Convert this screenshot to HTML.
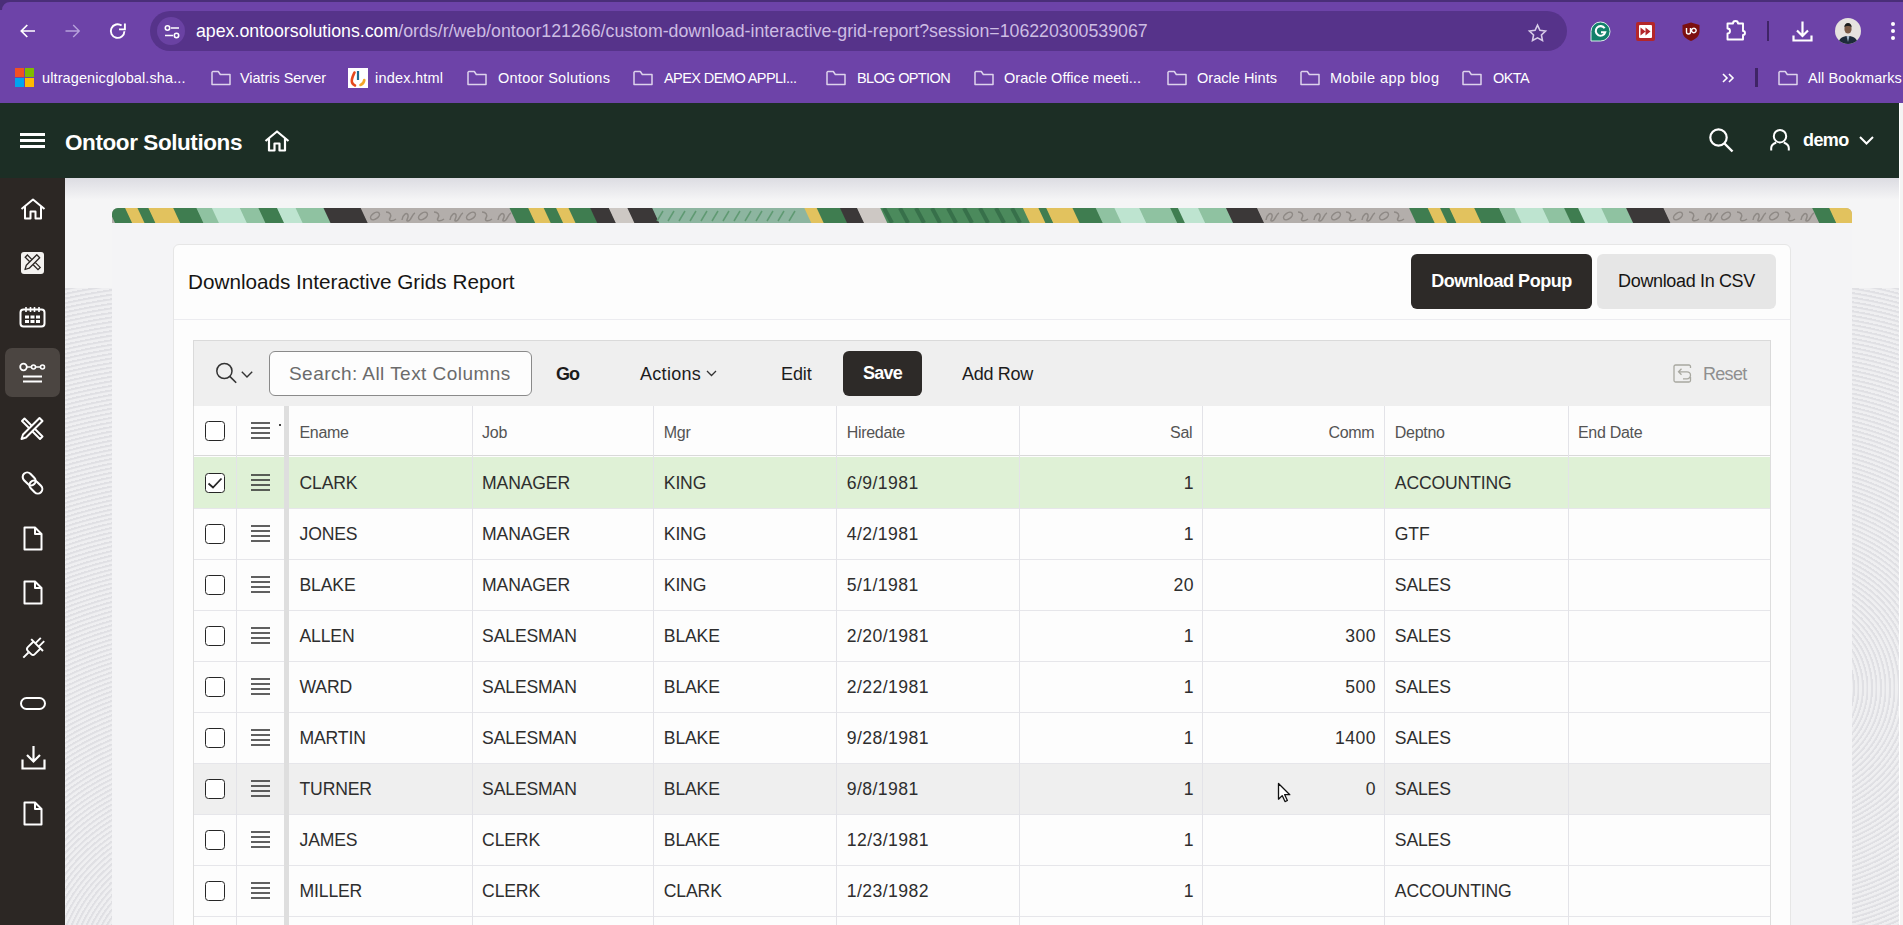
<!DOCTYPE html>
<html><head><meta charset="utf-8">
<style>
*{box-sizing:border-box;margin:0;padding:0}
html,body{width:1903px;height:925px;overflow:hidden;background:#f2f2f2;font-family:"Liberation Sans",sans-serif}
.abs{position:absolute}
svg{position:absolute;overflow:visible}
.chrome{left:0;top:0;width:1903px;height:103px;background:#6d43a8}
.chrome-top{left:0;top:0;width:1903px;height:2px;background:#4a2e78}
.addr{left:150px;top:11px;width:1417px;height:40px;border-radius:20px;background:#56338a}
.siteinfo{left:157px;top:17px;width:28px;height:28px;border-radius:14px;background:#6a42a3}
.url{left:196px;top:20px;font-size:17.75px;color:#fff;white-space:nowrap;line-height:22px}
.url span{color:#cdbde3}
.bm{top:68px;font-size:14.5px;color:#fff;white-space:nowrap;line-height:20px}
.apphdr{left:0;top:103px;width:1899px;height:75px;background:#1c2e25}
.nav{left:0;top:178px;width:65px;height:747px;background:#2c2724}
.bodybg{left:65px;top:178px;width:1834px;height:747px;background:#f5f5f6}
.sbar{left:1899px;top:103px;width:4px;height:822px;background:#f4f4f4;border-left:1px solid #fff}
.region{left:112px;top:223px;width:1740px;height:702px;background:#f4f4f6}
.banner{left:112px;top:208px;width:1740px;height:15px;border-radius:6px 6px 0 0;overflow:hidden}
.card{left:173px;top:244px;width:1618px;height:700px;background:#fdfdfd;border:1px solid #e6e6e6;border-radius:6px}
.ttl{left:188px;top:270px;font-size:20.7px;color:#161513;white-space:nowrap;line-height:24px}
.cbx{width:20px;height:20px;border:1.8px solid #262626;border-radius:3.5px;background:#fff}
.hd{font-size:16px;color:#545454;line-height:18px;white-space:nowrap;letter-spacing:-0.3px}
.cell{font-size:17.6px;color:#2e2e2e;line-height:22px;white-space:nowrap;letter-spacing:-0.15px}
.tb{left:193px;top:340px;width:1578px;height:67px;background:#efefef;border:1px solid #dadada;border-bottom:none}
.btn-dark{background:#2d2a28;color:#fff;font-weight:700;border-radius:6px;text-align:center}
.tbt{top:363px;font-size:18px;color:#1c1c1c;line-height:22px;white-space:nowrap}
</style></head>
<body>
<!-- ============ BROWSER CHROME ============ -->
<div class="abs chrome"></div>
<div class="abs chrome-top"></div>
<svg style="left:0;top:0" width="10" height="10" viewBox="0 0 10 10"><path d="M0 0H10V2A8 8 0 0 0 2 10H0z" fill="#4a2e78"/></svg>
<!-- back / fwd / reload -->
<svg style="left:19px;top:22px" width="18" height="18" viewBox="0 0 18 18"><path d="M16 9H2.5M8.3 3L2.3 9l6 6" fill="none" stroke="#fff" stroke-width="1.7"/></svg>
<svg style="left:64px;top:22px" width="18" height="18" viewBox="0 0 18 18"><path d="M1.5 9H15M9.2 3l6 6-6 6" fill="none" stroke="#b7a2dc" stroke-width="1.4"/></svg>
<svg style="left:109px;top:22px" width="18" height="18" viewBox="0 0 18 18"><path d="M15.4 9.2A6.8 6.8 0 1 1 12.6 3.6" fill="none" stroke="#fff" stroke-width="1.9"/><path d="M10 7.4H15.9V1.5" fill="none" stroke="#fff" stroke-width="1.9"/></svg>
<div class="abs addr"></div>
<div class="abs siteinfo"></div>
<svg style="left:164px;top:25px" width="16" height="14" viewBox="0 0 16 14"><circle cx="3.5" cy="3" r="2.2" fill="none" stroke="#fff" stroke-width="1.6"/><path d="M7 3h8M1 10.5h8" stroke="#fff" stroke-width="1.6"/><circle cx="12.5" cy="10.5" r="2.2" fill="none" stroke="#fff" stroke-width="1.6"/></svg>
<div class="abs url">apex.ontoorsolutions.com<span>/ords/r/web/ontoor121266/custom-download-interactive-grid-report?session=106220300539067</span></div>
<!-- star -->
<svg style="left:1528px;top:24px" width="19" height="18" viewBox="0 0 24 23"><path d="M12 1.5l3.1 6.6 7.2.9-5.3 5 1.4 7.1L12 17.6l-6.4 3.5L7 14l-5.3-5 7.2-.9z" fill="none" stroke="#d7cce8" stroke-width="2"/></svg>
<!-- grammarly -->
<svg style="left:1590px;top:21px" width="21" height="21" viewBox="0 0 21 21"><path d="M1 20V10.5A9.5 9.5 0 1 1 10.5 20z" fill="#11806a" stroke="#d9efe9" stroke-width="1"/><path d="M14.6 7.3A4.8 4.8 0 1 0 15.2 11.2H11" fill="none" stroke="#fff" stroke-width="2.1"/></svg>
<!-- red ff -->
<div class="abs" style="left:1636px;top:22px;width:19px;height:19px;background:#b3262a;border-radius:2px"></div>
<div class="abs" style="left:1639px;top:25px;width:13px;height:13px;background:#fff;border-radius:1px"></div>
<svg style="left:1640px;top:27px" width="12" height="9" viewBox="0 0 12 9"><path d="M0.5 0.5l5 4-5 4zM5.5 0.5l5 4-5 4z" fill="#b3262a"/></svg>
<!-- ublock -->
<svg style="left:1682px;top:22px" width="18" height="19" viewBox="0 0 18 19"><path d="M9 0.5L17.5 3v6.5c0 4.5-3.5 7.5-8.5 9.5C4 17 0.5 14 0.5 9.5V3z" fill="#7c1010"/><path d="M4.5 6v4a2 2 0 0 0 4 0V6M11.8 6.2a2.3 2.3 0 1 0 0.1 0" fill="none" stroke="#fff" stroke-width="1.4"/></svg>
<!-- puzzle -->
<svg style="left:1726px;top:20px" width="21" height="21" viewBox="0 0 21 21"><path d="M1.5 3.5h5.5a2.5 2.5 0 0 1 5 0h5v7.5a2 2 0 0 1 0 4V19.5H1.5v-6a2.5 2.5 0 0 0 0-5z" fill="none" stroke="#fff" stroke-width="1.9" stroke-linejoin="round"/></svg>
<div class="abs" style="left:1767px;top:21px;width:2px;height:20px;background:#3f2466"></div>
<!-- download -->
<svg style="left:1792px;top:21px" width="21" height="21" viewBox="0 0 21 21"><path d="M10.5 0.5v14M5 9.5l5.5 5.5 5.5-5.5M1.5 14.5v5h18v-5" fill="none" stroke="#fff" stroke-width="2.2"/></svg>
<!-- avatar -->
<svg style="left:1835px;top:18px" width="26" height="26" viewBox="0 0 26 26"><defs><clipPath id="av"><circle cx="13" cy="13" r="13"/></clipPath></defs><g clip-path="url(#av)"><rect width="26" height="26" fill="#e6e2df"/><path d="M3 26c1-6 5-8 10-8s9 2 10 8z" fill="#1d2a3a"/><path d="M11.5 18l1.5 6 1.5-6z" fill="#9fb3c8"/><ellipse cx="13" cy="11" rx="3.6" ry="4.6" fill="#7a5a46"/><path d="M9.3 9.5c0-3 1.5-4.5 3.7-4.5s3.7 1.5 3.7 4.5c-1-1.2-2.2-1.6-3.7-1.6s-2.7.4-3.7 1.6z" fill="#1b1b1b"/></g></svg>
<div class="abs" style="left:1891px;top:22px;width:4px;height:4px;border-radius:2px;background:#fff"></div>
<div class="abs" style="left:1891px;top:29px;width:4px;height:4px;border-radius:2px;background:#fff"></div>
<div class="abs" style="left:1891px;top:36px;width:4px;height:4px;border-radius:2px;background:#fff"></div>

<!-- bookmarks -->
<div class="abs" style="left:15px;top:68px;width:9px;height:9px;background:#f25022"></div>
<div class="abs" style="left:25px;top:68px;width:9px;height:9px;background:#7fba00"></div>
<div class="abs" style="left:15px;top:78px;width:9px;height:9px;background:#00a4ef"></div>
<div class="abs" style="left:25px;top:78px;width:9px;height:9px;background:#ffb900"></div>
<div class="abs bm" style="left:42px;letter-spacing:0.11px">ultragenicglobal.sha...</div>
<svg style="left:211px;top:70px" width="20" height="16" viewBox="0 0 20 16"><path d="M1 2.2v12.3h18V4.5H9.3L7.3 1.5H1.8z" fill="none" stroke="#ddd3ec" stroke-width="1.5" stroke-linejoin="round"/></svg>
<svg style="left:467px;top:70px" width="20" height="16" viewBox="0 0 20 16"><path d="M1 2.2v12.3h18V4.5H9.3L7.3 1.5H1.8z" fill="none" stroke="#ddd3ec" stroke-width="1.5" stroke-linejoin="round"/></svg>
<svg style="left:633px;top:70px" width="20" height="16" viewBox="0 0 20 16"><path d="M1 2.2v12.3h18V4.5H9.3L7.3 1.5H1.8z" fill="none" stroke="#ddd3ec" stroke-width="1.5" stroke-linejoin="round"/></svg>
<svg style="left:826px;top:70px" width="20" height="16" viewBox="0 0 20 16"><path d="M1 2.2v12.3h18V4.5H9.3L7.3 1.5H1.8z" fill="none" stroke="#ddd3ec" stroke-width="1.5" stroke-linejoin="round"/></svg>
<svg style="left:974px;top:70px" width="20" height="16" viewBox="0 0 20 16"><path d="M1 2.2v12.3h18V4.5H9.3L7.3 1.5H1.8z" fill="none" stroke="#ddd3ec" stroke-width="1.5" stroke-linejoin="round"/></svg>
<svg style="left:1167px;top:70px" width="20" height="16" viewBox="0 0 20 16"><path d="M1 2.2v12.3h18V4.5H9.3L7.3 1.5H1.8z" fill="none" stroke="#ddd3ec" stroke-width="1.5" stroke-linejoin="round"/></svg>
<svg style="left:1300px;top:70px" width="20" height="16" viewBox="0 0 20 16"><path d="M1 2.2v12.3h18V4.5H9.3L7.3 1.5H1.8z" fill="none" stroke="#ddd3ec" stroke-width="1.5" stroke-linejoin="round"/></svg>
<svg style="left:1462px;top:70px" width="20" height="16" viewBox="0 0 20 16"><path d="M1 2.2v12.3h18V4.5H9.3L7.3 1.5H1.8z" fill="none" stroke="#ddd3ec" stroke-width="1.5" stroke-linejoin="round"/></svg>
<svg style="left:1778px;top:70px" width="20" height="16" viewBox="0 0 20 16"><path d="M1 2.2v12.3h18V4.5H9.3L7.3 1.5H1.8z" fill="none" stroke="#ddd3ec" stroke-width="1.5" stroke-linejoin="round"/></svg>

<div class="abs bm" style="left:240px;letter-spacing:-0.05px">Viatris Server</div>
<div class="abs" style="left:348px;top:68px;width:20px;height:20px;background:#fff"></div>
<svg style="left:348px;top:68px" width="20" height="20" viewBox="0 0 20 20"><path d="M6.5 4.5C5 8 3 11 4 14.5c.5 1.5 1.5 2.5 3 3" fill="none" stroke="#e5481c" stroke-width="2.6" stroke-linecap="round"/><path d="M10 3v9" stroke="#1d6b8f" stroke-width="2.2"/><path d="M12.5 17c2.5-1 3.5-2.5 3.8-5" fill="none" stroke="#f4a62a" stroke-width="2.6" stroke-linecap="round"/></svg>
<div class="abs bm" style="left:375px;letter-spacing:0.2px">index.html</div>
<div class="abs bm" style="left:498px;letter-spacing:0.26px">Ontoor Solutions</div>
<div class="abs bm" style="left:664px;letter-spacing:-0.57px">APEX DEMO APPLI...</div>
<div class="abs bm" style="left:857px;letter-spacing:-0.63px">BLOG OPTION</div>
<div class="abs bm" style="left:1004px;letter-spacing:0.05px">Oracle Office meeti...</div>
<div class="abs bm" style="left:1197px;letter-spacing:0.02px">Oracle Hints</div>
<div class="abs bm" style="left:1330px;letter-spacing:0.47px">Mobile app blog</div>
<div class="abs bm" style="left:1493px;letter-spacing:-0.6px">OKTA</div>
<svg style="left:1722px;top:73px" width="12" height="10" viewBox="0 0 12 10"><path d="M1 1l4 4-4 4M7 1l4 4-4 4" fill="none" stroke="#fff" stroke-width="1.6"/></svg>
<div class="abs" style="left:1755px;top:68px;width:3px;height:19px;background:#3f2466"></div>
<div class="abs bm" style="left:1808px;letter-spacing:0.1px">All Bookmarks</div>

<!-- ============ APP HEADER ============ -->
<div class="abs apphdr"></div>
<div class="abs sbar"></div>
<div class="abs" style="left:20px;top:133px;width:25px;height:3px;background:#fff"></div>
<div class="abs" style="left:20px;top:139px;width:25px;height:3px;background:#fff"></div>
<div class="abs" style="left:20px;top:145px;width:25px;height:3px;background:#fff"></div>
<div class="abs" style="left:65px;top:128.5px;font-size:22.5px;font-weight:700;color:#fff;letter-spacing:-0.42px;line-height:28px;white-space:nowrap">Ontoor Solutions</div>
<svg style="left:264px;top:130px" width="26" height="22" viewBox="0 0 26 22"><path d="M1.5 11L13 1.5 24.5 11M5 8.5V20.5h5.5v-7h5v7H21V8.5" fill="none" stroke="#fff" stroke-width="2.2" stroke-linejoin="round"/></svg>
<svg style="left:1709px;top:128px" width="25" height="25" viewBox="0 0 25 25"><circle cx="9.5" cy="9.5" r="8.2" fill="none" stroke="#fff" stroke-width="2.2"/><path d="M15.5 15.5l8 8" stroke="#fff" stroke-width="2.4"/></svg>
<svg style="left:1770px;top:129px" width="20" height="22" viewBox="0 0 20 22"><circle cx="10" cy="7.2" r="6.2" fill="none" stroke="#fff" stroke-width="2"/><path d="M1.2 21.5v-2.5c0-3 2.5-4.5 5-5.5M18.8 21.5v-2.5c0-3-2.5-4.5-5-5.5" fill="none" stroke="#fff" stroke-width="2"/></svg>
<div class="abs" style="left:1803px;top:129px;font-size:18px;font-weight:700;color:#fff;letter-spacing:-0.6px;line-height:22px">demo</div>
<svg style="left:1859px;top:136px" width="15" height="9" viewBox="0 0 15 9"><path d="M1 1l6.5 6.5L14 1" fill="none" stroke="#fff" stroke-width="2"/></svg>

<!-- ============ NAV + BODY ============ -->
<div class="abs bodybg"></div>
<div class="abs nav"></div>
<svg style="left:20px;top:198px" width="26" height="22" viewBox="0 0 26 22"><path d="M1.5 11L13 1.5 24.5 11M5 8.5V20.5h5.5v-7h5v7H21V8.5" fill="none" stroke="#fff" stroke-width="2" stroke-linejoin="round"/></svg>
<div class="abs" style="left:21px;top:252px;width:23px;height:22px;border-radius:3px;background:#f4f2f0"></div>
<svg style="left:21px;top:252px" width="23" height="22" viewBox="0 0 23 22"><path d="M4 17.5l1.3-4.2L15.8 2.8l2.9 2.9L8.2 16.2z" fill="none" stroke="#2c2724" stroke-width="1.3" stroke-linejoin="round"/><path d="M8.8 9.8L4.2 5.2 6.4 3l4.6 4.6M12.2 12.8l4.8 4.8 2.2-2.2-4.8-4.8" fill="none" stroke="#2c2724" stroke-width="1.3"/></svg>
<svg style="left:19px;top:306px" width="27" height="22" viewBox="0 0 27 22"><rect x="1.5" y="3.5" width="24" height="17" rx="3" fill="none" stroke="#fff" stroke-width="2"/><path d="M7 1v5M11.5 1v5M15.5 1v5M20 1v5" stroke="#fff" stroke-width="1.6"/><rect x="6" y="9.5" width="4" height="3" fill="#fff"/><rect x="11.5" y="9.5" width="4" height="3" fill="#fff"/><rect x="17" y="9.5" width="4" height="3" fill="#fff"/><rect x="6" y="14" width="4" height="3" fill="#fff"/><rect x="11.5" y="14" width="4" height="3" fill="#fff"/><rect x="17" y="14" width="4" height="3" fill="#fff"/></svg>
<div class="abs" style="left:5px;top:348px;width:55px;height:49px;border-radius:7px;background:#4b4541"></div>
<svg style="left:19px;top:362px" width="27" height="22" viewBox="0 0 27 22"><circle cx="4.5" cy="5" r="3.3" fill="none" stroke="#fff" stroke-width="1.8"/><circle cx="14.5" cy="5" r="2" fill="none" stroke="#fff" stroke-width="1.6"/><circle cx="23.5" cy="5" r="2" fill="none" stroke="#fff" stroke-width="1.6"/><path d="M8 5h4.5M16.5 5h5" stroke="#fff" stroke-width="1.6"/><path d="M4 14.5h19M4 19.5h19" stroke="#fff" stroke-width="2"/></svg>
<svg style="left:20px;top:416px" width="25" height="24" viewBox="0 0 25 24"><path d="M4.5 2.5l18 18-2.5 2.5-18-18z" fill="none" stroke="#fff" stroke-width="2" stroke-linejoin="round"/><path d="M19.5 2l3 3L6 21.5 1.5 23 3 18.5z" fill="#2c2724" stroke="#fff" stroke-width="2" stroke-linejoin="round"/></svg>
<svg style="left:19px;top:470px" width="27" height="26" viewBox="0 0 27 26"><g transform="rotate(45 13.5 13)"><rect x="1" y="8" width="14.5" height="9" rx="4.5" fill="none" stroke="#fff" stroke-width="2.1"/><rect x="11.5" y="9" width="14.5" height="9" rx="4.5" fill="none" stroke="#fff" stroke-width="2.1"/></g></svg>
<svg style="left:23px;top:526px" width="20" height="25" viewBox="0 0 20 25"><path d="M1.5 1.5h10.5l6.5 6.5v15.5h-17z" fill="none" stroke="#fff" stroke-width="2" stroke-linejoin="round"/><path d="M12 1.5v6.5h6.5" fill="none" stroke="#fff" stroke-width="2" stroke-linejoin="round"/></svg>
<svg style="left:23px;top:580px" width="20" height="25" viewBox="0 0 20 25"><path d="M1.5 1.5h10.5l6.5 6.5v15.5h-17z" fill="none" stroke="#fff" stroke-width="2" stroke-linejoin="round"/><path d="M12 1.5v6.5h6.5" fill="none" stroke="#fff" stroke-width="2" stroke-linejoin="round"/></svg>
<svg style="left:23px;top:801px" width="20" height="25" viewBox="0 0 20 25"><path d="M1.5 1.5h10.5l6.5 6.5v15.5h-17z" fill="none" stroke="#fff" stroke-width="2" stroke-linejoin="round"/><path d="M12 1.5v6.5h6.5" fill="none" stroke="#fff" stroke-width="2" stroke-linejoin="round"/></svg>
<svg style="left:22px;top:636px" width="24" height="24" viewBox="0 0 24 24"><path d="M9.2 3.2L21 15" stroke="#fff" stroke-width="1.9"/><path d="M11.5 5.5L5.8 11.2Q4 13 5.8 14.8L9.2 18.2Q11 20 12.8 18.2L18.5 12.5" fill="none" stroke="#fff" stroke-width="1.9"/><path d="M13.3 7.3L18.8 1.8M16.7 10.7L22.2 5.2M6.5 16.5L1.3 21.7" stroke="#fff" stroke-width="1.9"/></svg>
<div class="abs" style="left:20px;top:697px;width:26px;height:13px;border:2px solid #fff;border-radius:7px"></div>
<svg style="left:21px;top:745px" width="25" height="25" viewBox="0 0 25 25"><path d="M12.5 1v15M6 10l6.5 6.5L19 10M1.5 14.5v9h22v-9" fill="none" stroke="#fff" stroke-width="2.2"/></svg>

<div class="abs" style="left:65px;top:288px;width:47px;height:637px;background:#eaeaec;background-image:repeating-radial-gradient(circle at 150px 700px,#efeff1 0,#efeff1 2px,#e0e0e4 3px,#e0e0e4 4.5px)"></div>
<div class="abs" style="left:1852px;top:288px;width:47px;height:637px;background:#eaeaec;background-image:repeating-radial-gradient(circle at -60px 400px,#efeff1 0,#efeff1 2px,#e0e0e4 3px,#e0e0e4 4.5px)"></div>
<div class="abs region"></div>
<div class="abs" style="left:65px;top:178px;width:1834px;height:22px;background:linear-gradient(rgba(200,200,210,0.55),rgba(230,230,235,0))"></div>
<svg style="left:112px;top:208px" width="1740" height="15" viewBox="0 0 1740 15"><defs><clipPath id="bc"><path d="M0 15V6a6 6 0 0 1 6-6H1734a6 6 0 0 1 6 6V15z"/></clipPath></defs><g clip-path="url(#bc)"><rect width="1740" height="15" fill="#b3aeab"/><path d="M-4.0 0H13.7L20.7 15H3.0z" fill="#3f7d50"/><path d="M13.1 0H26.1L33.1 15H20.1z" fill="#e2c25e"/><path d="M25.5 0H37.0L44.0 15H32.5z" fill="#3f7d50"/><path d="M36.4 0H61.8L68.8 15H43.4z" fill="#e2c25e"/><path d="M61.2 0H85.0L92.0 15H68.2z" fill="#3f7d50"/><path d="M84.4 0H100.5L107.5 15H91.4z" fill="#8fc2a1"/><path d="M99.9 0H128.4L135.4 15H106.9z" fill="#bee4d0"/><path d="M127.8 0H147.0L154.0 15H134.8z" fill="#8fc2a1"/><path d="M146.4 0H165.6L172.6 15H153.4z" fill="#3f7d50"/><path d="M165.0 0H184.2L191.2 15H172.0z" fill="#bee4d0"/><path d="M183.6 0H212.1L219.1 15H190.6z" fill="#8fc2a1"/><path d="M211.5 0H249.3L256.3 15H218.5z" fill="#3b3838"/><path d="M248.7 0H398.1L405.1 15H255.7z" fill="#b3aeab"/><path d="M397.5 0H416.8L423.8 15H404.5z" fill="#3f7d50"/><path d="M416.2 0H432.3L439.3 15H423.2z" fill="#e2c25e"/><path d="M431.7 0H444.7L451.7 15H438.7z" fill="#3f7d50"/><path d="M444.1 0H457.1L464.1 15H451.1z" fill="#e2c25e"/><path d="M456.5 0H478.8L485.8 15H463.5z" fill="#3f7d50"/><path d="M478.2 0H497.4L504.4 15H485.2z" fill="#3b3838"/><path d="M496.8 0H516.0L523.0 15H503.8z" fill="#cdc8c4"/><path d="M515.4 0H540.8L547.8 15H522.4z" fill="#3b3838"/><path d="M540.2 0H692.9L699.9 15H547.2z" fill="#8db5a0"/><path d="M692.3 0H705.3L712.3 15H699.3z" fill="#e2c25e"/><path d="M704.7 0H728.6L735.6 15H711.7z" fill="#3f7d50"/><path d="M728.0 0H745.6L752.6 15H735.0z" fill="#3b3838"/><path d="M745.0 0H768.9L775.9 15H752.0z" fill="#cdc8c4"/><path d="M768.3 0H911.5L918.5 15H775.3z" fill="#4b8a5c"/><path d="M910.9 0H927.0L934.0 15H917.9z" fill="#e2c25e"/><path d="M926.4 0H934.8L941.8 15H933.4z" fill="#3f7d50"/><path d="M934.2 0H961.1L968.1 15H941.2z" fill="#e2c25e"/><path d="M960.5 0H984.3L991.3 15H967.5z" fill="#3f7d50"/><path d="M983.7 0H1003.0L1010.0 15H990.7z" fill="#8fc2a1"/><path d="M1002.4 0H1027.8L1034.8 15H1009.4z" fill="#bee4d0"/><path d="M1027.2 0H1058.8L1065.8 15H1034.2z" fill="#8fc2a1"/><path d="M1058.2 0H1066.5L1073.5 15H1065.2z" fill="#3f7d50"/><path d="M1065.9 0H1086.7L1093.7 15H1072.9z" fill="#bee4d0"/><path d="M1086.1 0H1114.6L1121.6 15H1093.1z" fill="#8fc2a1"/><path d="M1114.0 0H1145.6L1152.6 15H1121.0z" fill="#3b3838"/><path d="M1145.0 0H1297.7L1304.7 15H1152.0z" fill="#b3aeab"/><path d="M1297.1 0H1316.3L1323.3 15H1304.1z" fill="#3f7d50"/><path d="M1315.7 0H1328.7L1335.7 15H1322.7z" fill="#e2c25e"/><path d="M1328.1 0H1338.0L1345.0 15H1335.1z" fill="#3f7d50"/><path d="M1337.4 0H1362.8L1369.8 15H1344.4z" fill="#e2c25e"/><path d="M1362.2 0H1387.6L1394.6 15H1369.2z" fill="#3f7d50"/><path d="M1387.0 0H1403.1L1410.1 15H1394.0z" fill="#8fc2a1"/><path d="M1402.5 0H1431.0L1438.0 15H1409.5z" fill="#bee4d0"/><path d="M1430.4 0H1452.7L1459.7 15H1437.4z" fill="#8fc2a1"/><path d="M1452.1 0H1466.7L1473.7 15H1459.1z" fill="#3f7d50"/><path d="M1466.1 0H1489.9L1496.9 15H1473.1z" fill="#bee4d0"/><path d="M1489.3 0H1514.7L1521.7 15H1496.3z" fill="#8fc2a1"/><path d="M1514.1 0H1552.0L1559.0 15H1521.1z" fill="#3b3838"/><path d="M1551.4 0H1700.8L1707.8 15H1558.4z" fill="#b3aeab"/><path d="M1700.2 0H1717.8L1724.8 15H1707.2z" fill="#3f7d50"/><path d="M1717.2 0H1745.1L1752.1 15H1724.2z" fill="#e2c25e"/><ellipse cx="263" cy="8" rx="5" ry="3" transform="rotate(-35 263 8)" fill="none" stroke="#8e8985" stroke-width="1.5"/><path d="M274 4c4 0 6 3 4 6s2 4 6 1" fill="none" stroke="#8e8985" stroke-width="1.5"/><path d="M290 12c1-6 5-8 6-5s-3 6 0 6 4-7 7-8" fill="none" stroke="#8e8985" stroke-width="1.5"/><ellipse cx="311" cy="8" rx="5" ry="3" transform="rotate(-35 311 8)" fill="none" stroke="#8e8985" stroke-width="1.5"/><path d="M322 4c4 0 6 3 4 6s2 4 6 1" fill="none" stroke="#8e8985" stroke-width="1.5"/><path d="M338 12c1-6 5-8 6-5s-3 6 0 6 4-7 7-8" fill="none" stroke="#8e8985" stroke-width="1.5"/><ellipse cx="359" cy="8" rx="5" ry="3" transform="rotate(-35 359 8)" fill="none" stroke="#8e8985" stroke-width="1.5"/><path d="M370 4c4 0 6 3 4 6s2 4 6 1" fill="none" stroke="#8e8985" stroke-width="1.5"/><path d="M386 12c1-6 5-8 6-5s-3 6 0 6 4-7 7-8" fill="none" stroke="#8e8985" stroke-width="1.5"/><path d="M545 13l6-10" stroke="#5f9a72" stroke-width="1.5"/><path d="M556 13l6-10" stroke="#5f9a72" stroke-width="1.5"/><path d="M567 13l6-10" stroke="#5f9a72" stroke-width="1.5"/><path d="M578 13l6-10" stroke="#5f9a72" stroke-width="1.5"/><path d="M589 13l6-10" stroke="#5f9a72" stroke-width="1.5"/><path d="M600 13l6-10" stroke="#5f9a72" stroke-width="1.5"/><path d="M611 13l6-10" stroke="#5f9a72" stroke-width="1.5"/><path d="M622 13l6-10" stroke="#5f9a72" stroke-width="1.5"/><path d="M633 13l6-10" stroke="#5f9a72" stroke-width="1.5"/><path d="M644 13l6-10" stroke="#5f9a72" stroke-width="1.5"/><path d="M655 13l6-10" stroke="#5f9a72" stroke-width="1.5"/><path d="M666 13l6-10" stroke="#5f9a72" stroke-width="1.5"/><path d="M677 13l6-10" stroke="#5f9a72" stroke-width="1.5"/><path d="M772 0l8 15" stroke="#37704a" stroke-width="4"/><path d="M788 0l8 15" stroke="#37704a" stroke-width="4"/><path d="M804 0l8 15" stroke="#37704a" stroke-width="4"/><path d="M820 0l8 15" stroke="#37704a" stroke-width="4"/><path d="M836 0l8 15" stroke="#37704a" stroke-width="4"/><path d="M852 0l8 15" stroke="#37704a" stroke-width="4"/><path d="M868 0l8 15" stroke="#37704a" stroke-width="4"/><path d="M884 0l8 15" stroke="#37704a" stroke-width="4"/><path d="M900 0l8 15" stroke="#37704a" stroke-width="4"/><path d="M1154 12c1-6 5-8 6-5s-3 6 0 6 4-7 7-8" fill="none" stroke="#8e8985" stroke-width="1.5"/><ellipse cx="1176" cy="8" rx="5" ry="3" transform="rotate(-35 1176 8)" fill="none" stroke="#8e8985" stroke-width="1.5"/><path d="M1186 4c4 0 6 3 4 6s2 4 6 1" fill="none" stroke="#8e8985" stroke-width="1.5"/><path d="M1202 12c1-6 5-8 6-5s-3 6 0 6 4-7 7-8" fill="none" stroke="#8e8985" stroke-width="1.5"/><ellipse cx="1224" cy="8" rx="5" ry="3" transform="rotate(-35 1224 8)" fill="none" stroke="#8e8985" stroke-width="1.5"/><path d="M1234 4c4 0 6 3 4 6s2 4 6 1" fill="none" stroke="#8e8985" stroke-width="1.5"/><path d="M1250 12c1-6 5-8 6-5s-3 6 0 6 4-7 7-8" fill="none" stroke="#8e8985" stroke-width="1.5"/><ellipse cx="1272" cy="8" rx="5" ry="3" transform="rotate(-35 1272 8)" fill="none" stroke="#8e8985" stroke-width="1.5"/><path d="M1282 4c4 0 6 3 4 6s2 4 6 1" fill="none" stroke="#8e8985" stroke-width="1.5"/><ellipse cx="1566" cy="8" rx="5" ry="3" transform="rotate(-35 1566 8)" fill="none" stroke="#8e8985" stroke-width="1.5"/><path d="M1577 4c4 0 6 3 4 6s2 4 6 1" fill="none" stroke="#8e8985" stroke-width="1.5"/><path d="M1593 12c1-6 5-8 6-5s-3 6 0 6 4-7 7-8" fill="none" stroke="#8e8985" stroke-width="1.5"/><ellipse cx="1614" cy="8" rx="5" ry="3" transform="rotate(-35 1614 8)" fill="none" stroke="#8e8985" stroke-width="1.5"/><path d="M1625 4c4 0 6 3 4 6s2 4 6 1" fill="none" stroke="#8e8985" stroke-width="1.5"/><path d="M1641 12c1-6 5-8 6-5s-3 6 0 6 4-7 7-8" fill="none" stroke="#8e8985" stroke-width="1.5"/><ellipse cx="1662" cy="8" rx="5" ry="3" transform="rotate(-35 1662 8)" fill="none" stroke="#8e8985" stroke-width="1.5"/><path d="M1673 4c4 0 6 3 4 6s2 4 6 1" fill="none" stroke="#8e8985" stroke-width="1.5"/><path d="M1689 12c1-6 5-8 6-5s-3 6 0 6 4-7 7-8" fill="none" stroke="#8e8985" stroke-width="1.5"/></g></svg>
<div class="abs card"></div>
<div class="abs ttl">Downloads Interactive Grids Report</div>
<div class="abs" style="left:174px;top:319px;width:1616px;height:1px;background:#ececf0"></div>
<div class="abs btn-dark" style="left:1411px;top:254px;width:181px;height:55px;font-size:18px;line-height:55px;letter-spacing:-0.45px">Download Popup</div>
<div class="abs" style="left:1597px;top:254px;width:179px;height:55px;background:#e6e6e6;border-radius:6px;font-size:18px;line-height:55px;text-align:center;color:#161513;letter-spacing:-0.35px">Download In CSV</div>
<!-- toolbar -->
<div class="abs tb"></div>
<svg style="left:215px;top:362px" width="24" height="24" viewBox="0 0 24 24"><circle cx="9.4" cy="9" r="7.6" fill="none" stroke="#333" stroke-width="1.5"/><path d="M14.8 14.4l6.4 6.4" stroke="#333" stroke-width="1.6"/></svg>
<svg style="left:241px;top:371px" width="12" height="7" viewBox="0 0 12 7"><path d="M0.8 0.8l5.2 5.2 5.2-5.2" fill="none" stroke="#333" stroke-width="1.4"/></svg>
<div class="abs" style="left:269px;top:351px;width:263px;height:45px;border:1.5px solid #8a8a8a;border-radius:6px;background:#fdfdfd"></div>
<div class="abs" style="left:289px;top:363px;font-size:19px;color:#6b6b6b;line-height:22px;letter-spacing:0.45px;white-space:nowrap">Search: All Text Columns</div>
<div class="abs tbt" style="left:556px;font-weight:700;letter-spacing:-1px">Go</div>
<div class="abs tbt" style="left:640px;letter-spacing:0.3px">Actions</div>
<svg style="left:706px;top:370px" width="11" height="7" viewBox="0 0 11 7"><path d="M1 1l4.5 4.5L10 1" fill="none" stroke="#333" stroke-width="1.3"/></svg>
<div class="abs tbt" style="left:781px;letter-spacing:-0.1px">Edit</div>
<div class="abs btn-dark" style="left:843px;top:351px;width:79px;height:45px;font-size:18px;line-height:45px;letter-spacing:-0.8px">Save</div>
<div class="abs tbt" style="left:962px;letter-spacing:-0.3px">Add Row</div>
<svg style="left:1673px;top:364px" width="20" height="19" viewBox="0 0 20 19"><path d="M17.5 4V2.5a1.5 1.5 0 0 0-1.5-1.5H2.5A1.5 1.5 0 0 0 1 2.5v14A1.5 1.5 0 0 0 2.5 18H16a1.5 1.5 0 0 0 1.5-1.5V13" fill="none" stroke="#a8a8a0" stroke-width="1.3"/><path d="M5.5 7.8H14a3.5 3.5 0 0 1 0 7H10M8.5 4.8l-3 3 3 3" fill="none" stroke="#a8a8a0" stroke-width="1.3"/></svg>
<div class="abs tbt" style="left:1703px;color:#8f8f8f;letter-spacing:-0.7px">Reset</div>
<div class="abs" style="left:193px;top:406px;width:1578px;height:530px;background:#fdfdfd;border-left:1px solid #dedede;border-right:1px solid #dedede"></div>
<div class="abs" style="left:194px;top:406px;width:1576px;height:50px;background:#fdfdfd;border-bottom:1px solid #d9d9d9"></div>
<div class="abs" style="left:194px;top:457px;width:1576px;height:3px;background:linear-gradient(#dcdcdc,rgba(220,220,220,0))"></div>
<div class="abs" style="left:194px;top:457px;width:1576px;height:51px;background:#dff1d6"></div>
<div class="abs" style="left:194px;top:508px;width:1576px;height:1px;background:#e6e6ea"></div>
<div class="abs" style="left:194px;top:559px;width:1576px;height:1px;background:#e6e6ea"></div>
<div class="abs" style="left:194px;top:610px;width:1576px;height:1px;background:#e6e6ea"></div>
<div class="abs" style="left:194px;top:661px;width:1576px;height:1px;background:#e6e6ea"></div>
<div class="abs" style="left:194px;top:712px;width:1576px;height:1px;background:#e6e6ea"></div>
<div class="abs" style="left:194px;top:763px;width:1576px;height:1px;background:#e6e6ea"></div>
<div class="abs" style="left:194px;top:764px;width:1576px;height:50px;background:#efefef"></div>
<div class="abs" style="left:194px;top:814px;width:1576px;height:1px;background:#e6e6ea"></div>
<div class="abs" style="left:194px;top:865px;width:1576px;height:1px;background:#e6e6ea"></div>
<div class="abs" style="left:194px;top:916px;width:1576px;height:1px;background:#e6e6ea"></div>
<div class="abs" style="left:236px;top:406px;width:1px;height:530px;background:#e3e3e8"></div>
<div class="abs" style="left:284px;top:406px;width:5px;height:530px;background:#dedede"></div>
<div class="abs" style="left:472px;top:406px;width:1px;height:530px;background:#e3e3e8"></div>
<div class="abs" style="left:653px;top:406px;width:1px;height:530px;background:#e3e3e8"></div>
<div class="abs" style="left:836px;top:406px;width:1px;height:530px;background:#e3e3e8"></div>
<div class="abs" style="left:1019px;top:406px;width:1px;height:530px;background:#e3e3e8"></div>
<div class="abs" style="left:1202px;top:406px;width:1px;height:530px;background:#e3e3e8"></div>
<div class="abs" style="left:1384px;top:406px;width:1px;height:530px;background:#e3e3e8"></div>
<div class="abs" style="left:1568px;top:406px;width:1px;height:530px;background:#e3e3e8"></div>
<div class="abs cbx" style="left:205px;top:421px"></div>
<svg style="left:251px;top:421.5px" width="20" height="16" viewBox="0 0 20 16"><path d="M0 1h19M0 6h19M0 11h19M0 16h19" stroke="#2c2c2c" stroke-width="1.6"/></svg>
<div class="abs" style="left:279px;top:424px;width:2px;height:2px;background:#444"></div>
<div class="abs hd" style="left:299.5px;top:424px">Ename</div>
<div class="abs hd" style="left:482.1px;top:424px">Job</div>
<div class="abs hd" style="left:663.8px;top:424px">Mgr</div>
<div class="abs hd" style="left:846.7px;top:424px">Hiredate</div>
<div class="abs hd" style="left:1019.1px;width:173.2px;text-align:right;top:424px">Sal</div>
<div class="abs hd" style="left:1202.3px;width:172.0px;text-align:right;top:424px">Comm</div>
<div class="abs hd" style="left:1394.8px;top:424px">Deptno</div>
<div class="abs hd" style="left:1578.0px;top:424px">End Date</div>
<div class="abs cbx" style="left:205px;top:473px"></div><svg style="left:205px;top:473px" width="20" height="20" viewBox="0 0 20 20"><path d="M3.5 10.5l4.5 4 8.5-9" fill="none" stroke="#262626" stroke-width="1.8"/></svg>
<svg style="left:251px;top:473.5px" width="20" height="16" viewBox="0 0 20 16"><path d="M0 1h19M0 6h19M0 11h19M0 16h19" stroke="#2c2c2c" stroke-width="1.6"/></svg>
<div class="abs cell" style="left:299.5px;top:472px">CLARK</div>
<div class="abs cell" style="left:482.1px;top:472px">MANAGER</div>
<div class="abs cell" style="left:663.8px;top:472px">KING</div>
<div class="abs cell" style="left:846.7px;top:472px;letter-spacing:0.45px">6/9/1981</div>
<div class="abs cell" style="left:1019.1px;width:174.9px;text-align:right;top:472px;letter-spacing:0.45px">1</div>
<div class="abs cell" style="left:1394.8px;top:472px">ACCOUNTING</div>
<div class="abs cbx" style="left:205px;top:524px"></div>
<svg style="left:251px;top:524.5px" width="20" height="16" viewBox="0 0 20 16"><path d="M0 1h19M0 6h19M0 11h19M0 16h19" stroke="#2c2c2c" stroke-width="1.6"/></svg>
<div class="abs cell" style="left:299.5px;top:523px">JONES</div>
<div class="abs cell" style="left:482.1px;top:523px">MANAGER</div>
<div class="abs cell" style="left:663.8px;top:523px">KING</div>
<div class="abs cell" style="left:846.7px;top:523px;letter-spacing:0.45px">4/2/1981</div>
<div class="abs cell" style="left:1019.1px;width:174.9px;text-align:right;top:523px;letter-spacing:0.45px">1</div>
<div class="abs cell" style="left:1394.8px;top:523px">GTF</div>
<div class="abs cbx" style="left:205px;top:575px"></div>
<svg style="left:251px;top:575.5px" width="20" height="16" viewBox="0 0 20 16"><path d="M0 1h19M0 6h19M0 11h19M0 16h19" stroke="#2c2c2c" stroke-width="1.6"/></svg>
<div class="abs cell" style="left:299.5px;top:574px">BLAKE</div>
<div class="abs cell" style="left:482.1px;top:574px">MANAGER</div>
<div class="abs cell" style="left:663.8px;top:574px">KING</div>
<div class="abs cell" style="left:846.7px;top:574px;letter-spacing:0.45px">5/1/1981</div>
<div class="abs cell" style="left:1019.1px;width:174.9px;text-align:right;top:574px;letter-spacing:0.45px">20</div>
<div class="abs cell" style="left:1394.8px;top:574px">SALES</div>
<div class="abs cbx" style="left:205px;top:626px"></div>
<svg style="left:251px;top:626.5px" width="20" height="16" viewBox="0 0 20 16"><path d="M0 1h19M0 6h19M0 11h19M0 16h19" stroke="#2c2c2c" stroke-width="1.6"/></svg>
<div class="abs cell" style="left:299.5px;top:625px">ALLEN</div>
<div class="abs cell" style="left:482.1px;top:625px">SALESMAN</div>
<div class="abs cell" style="left:663.8px;top:625px">BLAKE</div>
<div class="abs cell" style="left:846.7px;top:625px;letter-spacing:0.45px">2/20/1981</div>
<div class="abs cell" style="left:1019.1px;width:174.9px;text-align:right;top:625px;letter-spacing:0.45px">1</div>
<div class="abs cell" style="left:1202.3px;width:173.7px;text-align:right;top:625px;letter-spacing:0.45px">300</div>
<div class="abs cell" style="left:1394.8px;top:625px">SALES</div>
<div class="abs cbx" style="left:205px;top:677px"></div>
<svg style="left:251px;top:677.5px" width="20" height="16" viewBox="0 0 20 16"><path d="M0 1h19M0 6h19M0 11h19M0 16h19" stroke="#2c2c2c" stroke-width="1.6"/></svg>
<div class="abs cell" style="left:299.5px;top:676px">WARD</div>
<div class="abs cell" style="left:482.1px;top:676px">SALESMAN</div>
<div class="abs cell" style="left:663.8px;top:676px">BLAKE</div>
<div class="abs cell" style="left:846.7px;top:676px;letter-spacing:0.45px">2/22/1981</div>
<div class="abs cell" style="left:1019.1px;width:174.9px;text-align:right;top:676px;letter-spacing:0.45px">1</div>
<div class="abs cell" style="left:1202.3px;width:173.7px;text-align:right;top:676px;letter-spacing:0.45px">500</div>
<div class="abs cell" style="left:1394.8px;top:676px">SALES</div>
<div class="abs cbx" style="left:205px;top:728px"></div>
<svg style="left:251px;top:728.5px" width="20" height="16" viewBox="0 0 20 16"><path d="M0 1h19M0 6h19M0 11h19M0 16h19" stroke="#2c2c2c" stroke-width="1.6"/></svg>
<div class="abs cell" style="left:299.5px;top:727px">MARTIN</div>
<div class="abs cell" style="left:482.1px;top:727px">SALESMAN</div>
<div class="abs cell" style="left:663.8px;top:727px">BLAKE</div>
<div class="abs cell" style="left:846.7px;top:727px;letter-spacing:0.45px">9/28/1981</div>
<div class="abs cell" style="left:1019.1px;width:174.9px;text-align:right;top:727px;letter-spacing:0.45px">1</div>
<div class="abs cell" style="left:1202.3px;width:173.7px;text-align:right;top:727px;letter-spacing:0.45px">1400</div>
<div class="abs cell" style="left:1394.8px;top:727px">SALES</div>
<div class="abs cbx" style="left:205px;top:779px"></div>
<svg style="left:251px;top:779.5px" width="20" height="16" viewBox="0 0 20 16"><path d="M0 1h19M0 6h19M0 11h19M0 16h19" stroke="#2c2c2c" stroke-width="1.6"/></svg>
<div class="abs cell" style="left:299.5px;top:778px">TURNER</div>
<div class="abs cell" style="left:482.1px;top:778px">SALESMAN</div>
<div class="abs cell" style="left:663.8px;top:778px">BLAKE</div>
<div class="abs cell" style="left:846.7px;top:778px;letter-spacing:0.45px">9/8/1981</div>
<div class="abs cell" style="left:1019.1px;width:174.9px;text-align:right;top:778px;letter-spacing:0.45px">1</div>
<div class="abs cell" style="left:1202.3px;width:173.7px;text-align:right;top:778px;letter-spacing:0.45px">0</div>
<div class="abs cell" style="left:1394.8px;top:778px">SALES</div>
<div class="abs cbx" style="left:205px;top:830px"></div>
<svg style="left:251px;top:830.5px" width="20" height="16" viewBox="0 0 20 16"><path d="M0 1h19M0 6h19M0 11h19M0 16h19" stroke="#2c2c2c" stroke-width="1.6"/></svg>
<div class="abs cell" style="left:299.5px;top:829px">JAMES</div>
<div class="abs cell" style="left:482.1px;top:829px">CLERK</div>
<div class="abs cell" style="left:663.8px;top:829px">BLAKE</div>
<div class="abs cell" style="left:846.7px;top:829px;letter-spacing:0.45px">12/3/1981</div>
<div class="abs cell" style="left:1019.1px;width:174.9px;text-align:right;top:829px;letter-spacing:0.45px">1</div>
<div class="abs cell" style="left:1394.8px;top:829px">SALES</div>
<div class="abs cbx" style="left:205px;top:881px"></div>
<svg style="left:251px;top:881.5px" width="20" height="16" viewBox="0 0 20 16"><path d="M0 1h19M0 6h19M0 11h19M0 16h19" stroke="#2c2c2c" stroke-width="1.6"/></svg>
<div class="abs cell" style="left:299.5px;top:880px">MILLER</div>
<div class="abs cell" style="left:482.1px;top:880px">CLERK</div>
<div class="abs cell" style="left:663.8px;top:880px">CLARK</div>
<div class="abs cell" style="left:846.7px;top:880px;letter-spacing:0.45px">1/23/1982</div>
<div class="abs cell" style="left:1019.1px;width:174.9px;text-align:right;top:880px;letter-spacing:0.45px">1</div>
<div class="abs cell" style="left:1394.8px;top:880px">ACCOUNTING</div>
<svg style="left:1277px;top:782px" width="14" height="21" viewBox="0 0 14 21"><path d="M1.5 1.5V17.2L5.2 13.6 8 19.6 10.4 18.5 7.7 12.7H12.8z" fill="#fff" stroke="#111" stroke-width="1.3" stroke-linejoin="round"/></svg>
</body></html>
